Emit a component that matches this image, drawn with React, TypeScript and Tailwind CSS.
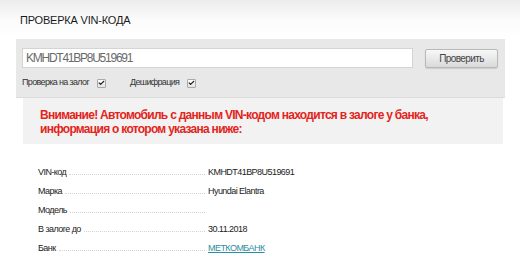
import { Check } from 'lucide-react'

const rows = [
  { label: 'VIN-код', value: 'KMHDT41BP8U519691' },
  { label: 'Марка', value: 'Hyundai Elantra' },
  { label: 'Модель', value: '' },
  { label: 'В залоге до', value: '30.11.2018' },
  { label: 'Банк', value: 'МЕТКОМБАНК', link: true },
]

function Checkbox() {
  return (
    <span className="ml-[8px] flex h-[9px] w-[9px] items-center justify-center rounded-[1px] border border-[#a9a9a9] bg-gradient-to-b from-white to-[#e4e4e4]">
      <Check className="size-[8px] text-[#222]" strokeWidth={4} />
    </span>
  )
}

export default function App() {
  return (
    <div className="h-[279px] w-[520px] overflow-hidden bg-white font-['Liberation_Sans',Arial,sans-serif]">
      {/* Header */}
      <div className="h-[39px] bg-gradient-to-b from-[#ececec] via-[#fbfbfb] to-white pl-[20px] pt-[14px]">
        <h1 className="text-[11px] leading-[13px] tracking-[-0.2px] text-[#1a1a1a]">ПРОВЕРКА VIN-КОДА</h1>
      </div>

      {/* Search panel */}
      <div className="ml-[16px] h-[59px] w-[489px] border-b border-[#dcdcdc] bg-[#e8e8e8] pl-[6px] pr-[7px] pt-[9px]">
        <div className="flex items-center">
          <div className="flex h-[20px] w-[391px] items-center border border-[#d4d4d4] bg-white pl-[3px] text-[12px] tracking-[-1.25px] text-[#6a6a6a]">
            KMHDT41BP8U519691
          </div>
          <button className="ml-auto flex h-[19px] w-[73px] items-center justify-center rounded-[2px] border border-[#b8b8b8] bg-gradient-to-b from-[#f8f8f8] to-[#dadada] text-[10px] tracking-[-0.6px] text-[#444] shadow-[0_1px_1px_rgba(0,0,0,0.12)]">
            Проверить
          </button>
        </div>
        <div className="mt-[8px] flex h-[14px] items-center text-[9px] tracking-[-0.65px] text-[#333]">
          <span>Проверка на залог</span>
          <Checkbox />
          <span className="ml-[24px]">Дешифрация</span>
          <Checkbox />
        </div>
      </div>

      {/* Warning */}
      <div className="ml-[23px] h-[46px] w-[480px] bg-[#f2f2f2] pl-[17px] pt-[10px] text-[12px] font-bold leading-[14px] tracking-[-0.72px] text-[#e3241b]">
        <p>Внимание! Автомобиль с данным VIN-кодом находится в залоге у банка,</p>
        <p>информация о котором указана ниже:</p>
      </div>

      {/* Details */}
      <div className="mt-[19px] pl-[38px] text-[9px] tracking-[-0.55px] text-[#222]">
        {rows.map((r) => (
          <div key={r.label} className="flex h-[19px] items-center">
            <div className="flex w-[167px] items-center">
              <span>{r.label}</span>
              <span className="ml-[3px] mt-[3px] flex-1 border-b border-dotted border-[#d2d2d2]" />
            </div>
            <span
              className={
                r.link ? 'ml-[3px] text-[#2d8ea3] underline' : 'ml-[3px]'
              }
            >
              {r.value}
            </span>
          </div>
        ))}
      </div>
    </div>
  )
}
